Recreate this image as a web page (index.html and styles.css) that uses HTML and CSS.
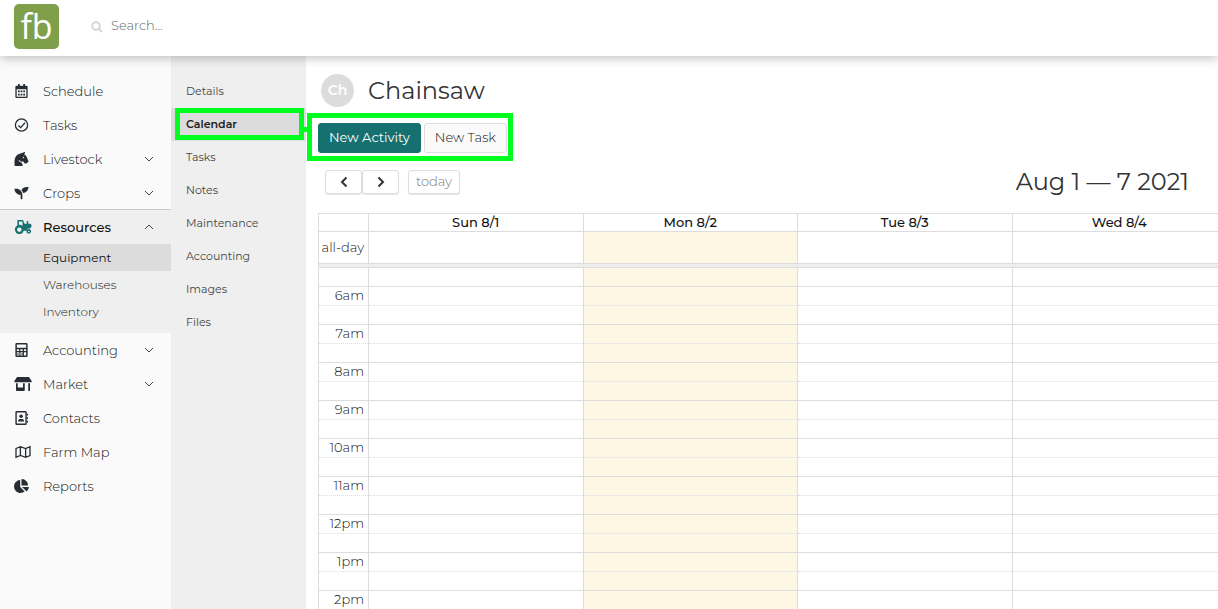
FILE: index.html
```html
<!doctype html>
<html lang="en">
  <head>
    <meta charset="utf-8" />
    <meta name="viewport" content="width=device-width, initial-scale=1" />
    <title>Chainsaw - Calendar</title>
    <link rel="stylesheet" href="styles.css">
  </head>

  <body>
    <header class="topbar">
      <a class="logo" href="#">fb</a>
      <form class="search">
        <svg class="search-icon" viewBox="0 0 12 12"><circle cx="5" cy="5" r="3.8" /><path d="M8 8l3 3" /></svg>
        <input type="search" aria-label="Search" placeholder="Search..." />
      </form>
    </header>

    <div class="layout">
      <!-- Main navigation -->
      <nav class="sidebar">
        <a class="nav-item" href="#">
          <svg class="icon" viewBox="0 0 16 16"><path d="M4 0h2v2h4V0h2v2h1.500q1.500 0 1.500 1.500V14.500q0 1.500-1.500 1.500h-11Q1 16 1 14.500v-11Q1 2 2.500 2H4zM2.500 6v8.500h11V6z" fill-rule="evenodd" /><path d="M4 7.500h2v2H4zM7 7.500h2v2H7zM10 7.500h2v2h-2zM4 11h2v2H4zM7 11h2v2H7zM10 11h2v2h-2z" /></svg>
          <span>Schedule</span>
        </a>
        <a class="nav-item" href="#">
          <svg class="icon line" viewBox="0 0 16 16"><circle cx="8" cy="8" r="7" /><path d="M4.500 8.500l2.500 2.500 5-5.500" /></svg>
          <span>Tasks</span>
        </a>
        <a class="nav-item" href="#">
          <svg class="icon" viewBox="0 0 512 512"><path d="M509.800 332.500l-69.900-164.300c-14.900-41.200-50.400-71-93-79.200 18-10.600 46.300-35.900 34.200-82.300-1.300-5-7.100-7.900-12-6.100L166.900 76.300C35.900 123.400 0 238.900 0 398.800V480c0 17.700 14.300 32 32 32h236.200c23.800 0 39.300-25 28.600-46.300L256 384v-.7c-45.600-3.500-84.600-30.700-104.300-69.600-1.600-3.100-.9-6.900 1.600-9.300l12.100-12.100c3.900-3.900 10.600-2.700 12.900 2.400 14.800 33.700 48.200 57.400 87.400 57.400 17.200 0 33-5.100 46.800-13.200l46 63.900c6 8.400 15.700 13.300 26 13.300h50.300c8.500 0 16.600-3.400 22.600-9.400l45.300-39.800c8.900-9.100 11.700-22.600 7.100-34.400zM328 224c-13.300 0-24-10.700-24-24s10.700-24 24-24 24 10.700 24 24-10.700 24-24 24z" /></svg>
          <span>Livestock</span>
          <svg class="chevron" viewBox="0 0 10 6"><path d="M1 1l4 4 4-4" /></svg>
        </a>
        <a class="nav-item" href="#">
          <svg class="icon" viewBox="0 0 512 512"><path d="M64 96H0c0 123.700 100.300 224 224 224v144c0 8.800 7.200 16 16 16h32c8.800 0 16-7.200 16-16V320C288 196.300 187.700 96 64 96zm384-64c-84.200 0-157.400 46.500-195.700 115.200 27.700 30.200 48.200 66.900 59 107.600C424 243.100 512 147.900 512 32h-64z" /></svg>
          <span>Crops</span>
          <svg class="chevron" viewBox="0 0 10 6"><path d="M1 1l4 4 4-4" /></svg>
        </a>
        <div class="nav-group">
          <a class="nav-item open" href="#">
            <svg class="icon wide" viewBox="0 0 18 15"><path fill-rule="evenodd" d="M3 0h6l1.600 4H13V1h1.600v3H17l1 1v2.500l-1.500 1.500h-2.200q-1.300.8-1.300 2.500H9.700A4.700 4.700 0 0 1 .5 11.200 4.700 4.700 0 0 1 3 5.800zM4.700 1.600v3.500q2.300-.1 3.800 1.400V2.500L8.100 1.600zM5 8a2.400 2.400 0 1 0 .1 0zM15.200 9.700a2.500 2.500 0 1 1-.1 0zm0 1.700a.8.800 0 1 0 .1 0z" /></svg>
            <span>Resources</span>
            <svg class="chevron" viewBox="0 0 10 6"><path d="M1 5l4-4 4 4" /></svg>
          </a>
          <a class="nav-sub active" href="#">Equipment</a>
          <a class="nav-sub" href="#">Warehouses</a>
          <a class="nav-sub" href="#">Inventory</a>
        </div>
        <a class="nav-item" href="#">
          <svg class="icon" viewBox="0 0 16 16"><path fill-rule="evenodd" d="M2.500 0h11Q15 0 15 1.500v13q0 1.500-1.500 1.500h-11Q1 16 1 14.500v-13Q1 0 2.500 0zM2.700 1.700v3.600h10.600V1.700zM2.700 7v2h2.500V7zM6.700 7v2h2.600V7zM10.800 7v2h2.500V7zM2.700 10.700v3.600h2.500v-3.600zM6.700 10.700v3.600h2.600v-3.600zM10.800 10.700v3.600h2.500v-3.600zM3 12h6v1H3z" /></svg>
          <span>Accounting</span>
          <svg class="chevron" viewBox="0 0 10 6"><path d="M1 1l4 4 4-4" /></svg>
        </a>
        <a class="nav-item" href="#">
          <svg class="icon wide" viewBox="0 0 640 512"><path d="M320 384H128V224H64v256c0 17.700 14.300 32 32 32h256c17.700 0 32-14.300 32-32V224h-64v160zm314.600-241.800l-85.300-128c-6-8.900-16-14.200-26.700-14.200H117.400c-10.700 0-20.700 5.300-26.600 14.200l-85.300 128c-14.200 21.300 1 49.800 26.600 49.800H608c25.500 0 40.700-28.500 26.600-49.800zM512 496c0 8.800 7.200 16 16 16h32c8.800 0 16-7.200 16-16V224h-64v272z" /></svg>
          <span>Market</span>
          <svg class="chevron" viewBox="0 0 10 6"><path d="M1 1l4 4 4-4" /></svg>
        </a>
        <a class="nav-item" href="#">
          <svg class="icon" viewBox="0 0 16 16"><path fill-rule="evenodd" d="M2.500 0h10Q14 0 14 1.500v13q0 1.500-1.500 1.500h-10Q1 16 1 14.500v-13Q1 0 2.500 0zM2.600 1.600v12.800h9.800V1.600z" /><circle cx="7.500" cy="6" r="2" /><path d="M4 12q0-3 2-3h3q2 0 2 3zM14 3h1.500v2H14zM14 7h1.500v2H14zM14 11h1.500v2H14z" /></svg>
          <span>Contacts</span>
        </a>
        <a class="nav-item" href="#">
          <svg class="icon wide line" viewBox="0 0 18 16"><path d="M1 4l5-2 6 2 5-2v10l-5 2-6-2-5 2zM6 2v10M12 4v10" /></svg>
          <span>Farm Map</span>
        </a>
        <a class="nav-item" href="#">
          <svg class="icon" viewBox="0 0 544 512"><path d="M527.790 288H290.500l158.030 158.030c6.040 6.040 15.980 6.530 22.190.68 38.700-36.460 65.320-85.610 73.130-140.860 1.340-9.460-6.510-17.850-16.060-17.850zm-15.830-64.800C503.720 103.740 408.260 8.280 288.800.04 279.680-.59 272 7.100 272 16.240V240h223.770c9.140 0 16.820-7.680 16.190-16.800zM224 288V50.710c0-9.550-8.390-17.400-17.840-16.060C86.990 51.490-4.100 155.600.14 280.370 4.500 408.510 114.830 513.590 243.030 511.980c50.400-.63 96.970-16.870 135.260-44.030 7.900-5.600 8.420-17.230 1.570-24.080L224 288z" /></svg>
          <span>Reports</span>
        </a>
      </nav>

      <!-- Pages of the selected resource -->
      <nav class="subnav">
        <a href="#">Details</a>
        <a class="active" href="#">Calendar</a>
        <a href="#">Tasks</a>
        <a href="#">Notes</a>
        <a href="#">Maintenance</a>
        <a href="#">Accounting</a>
        <a href="#">Images</a>
        <a href="#">Files</a>
      </nav>

      <main class="content">
        <div class="title">
          <span class="avatar">Ch</span>
          <h1>Chainsaw</h1>
        </div>

        <div class="actions">
          <button class="btn primary" type="button">New Activity</button>
          <button class="btn" type="button">New Task</button>
        </div>

        <div class="toolbar">
          <div class="arrows">
            <button type="button" aria-label="Previous week"><svg viewBox="0 0 8 12"><path d="M6.500 1.500L2 6l4.500 4.500" /></svg></button>
            <button type="button" aria-label="Next week"><svg viewBox="0 0 8 12"><path d="M1.500 1.500L6 6l-4.500 4.500" /></svg></button>
          </div>
          <button class="today-button" type="button" disabled>today</button>
          <h2>Aug 1 — 7 2021</h2>
        </div>

        <table class="calendar">
          <colgroup>
            <col class="axis" />
            <col />
            <col class="today" />
            <col />
            <col />
          </colgroup>
          <thead>
            <tr><th></th><th>Sun 8/1</th><th>Mon 8/2</th><th>Tue 8/3</th><th>Wed 8/4</th></tr>
          </thead>
          <tbody>
            <tr class="all-day"><td>all-day</td><td></td><td></td><td></td><td></td></tr>
            <tr class="divider"><td colspan="5"></td></tr>
          </tbody>
          <tbody class="slots">
            <tr class="half"><td></td><td></td><td></td><td></td><td></td></tr>
            <tr><td>6am</td><td></td><td></td><td></td><td></td></tr>
            <tr class="half"><td></td><td></td><td></td><td></td><td></td></tr>
            <tr><td>7am</td><td></td><td></td><td></td><td></td></tr>
            <tr class="half"><td></td><td></td><td></td><td></td><td></td></tr>
            <tr><td>8am</td><td></td><td></td><td></td><td></td></tr>
            <tr class="half"><td></td><td></td><td></td><td></td><td></td></tr>
            <tr><td>9am</td><td></td><td></td><td></td><td></td></tr>
            <tr class="half"><td></td><td></td><td></td><td></td><td></td></tr>
            <tr><td>10am</td><td></td><td></td><td></td><td></td></tr>
            <tr class="half"><td></td><td></td><td></td><td></td><td></td></tr>
            <tr><td>11am</td><td></td><td></td><td></td><td></td></tr>
            <tr class="half"><td></td><td></td><td></td><td></td><td></td></tr>
            <tr><td>12pm</td><td></td><td></td><td></td><td></td></tr>
            <tr class="half"><td></td><td></td><td></td><td></td><td></td></tr>
            <tr><td>1pm</td><td></td><td></td><td></td><td></td></tr>
            <tr class="half"><td></td><td></td><td></td><td></td><td></td></tr>
            <tr><td>2pm</td><td></td><td></td><td></td><td></td></tr>
            <tr class="half"><td></td><td></td><td></td><td></td><td></td></tr>
          </tbody>
        </table>
      </main>
    </div>
  </body>
</html>
```
FILE: styles.css
```css
* {
  box-sizing: border-box;
}

body {
  margin: 0;
  height: 100vh;
  display: flex;
  flex-direction: column;
  overflow: hidden;
  font-family: Montserrat, Inter, sans-serif;
  font-size: 13px;
  font-weight: 300;
  color: #111;
  background: white;
}

a {
  color: inherit;
  text-decoration: none;
}

button,
input {
  font: inherit;
  color: inherit;
}

h1,
h2 {
  margin: 0;
  font-size: 24px;
  line-height: 32px;
  font-weight: 400;
  color: #333;
}

.topbar {
  position: relative;
  z-index: 1;
  flex: none;
  display: flex;
  align-items: flex-start;
  gap: 32px;
  height: 56px;
  padding: 4px 14px;
  background: white;
  box-shadow: 0 2px 10px rgba(0, 0, 0, 0.25);
}

.logo {
  width: 45px;
  height: 45px;
  border-radius: 5px;
  background: #7f9f4a;
  color: white;
  font-family: "Open Sans", sans-serif;
  font-size: 34px;
  font-weight: 500;
  line-height: 44px;
  text-align: center;
}

.search {
  display: flex;
  align-items: center;
  gap: 8px;
  height: 42px;
}

.search-icon {
  width: 12px;
  height: 12px;
  margin-top: 4px;
  fill: none;
  stroke: #d5d5d5;
  stroke-width: 2;
}

.search input {
  width: 200px;
  padding: 0;
  border: none;
  outline: none;
}

.search input::placeholder {
  color: #666;
}

.layout {
  flex: 1;
  min-height: 0;
  display: flex;
}

.sidebar {
  flex: none;
  width: 171px;
  padding-top: 18px;
  background: #fafafa;
}

.nav-item {
  display: flex;
  align-items: center;
  height: 34px;
  padding: 0 17px 0 14px;
}

.nav-item span {
  flex: 1;
}

.icon {
  width: 15px;
  height: 14px;
  margin-right: 14px;
  fill: #272d33;
}

.icon.wide {
  width: 18px;
  margin-right: 11px;
}

.icon.line {
  fill: none;
  stroke: #272d33;
  stroke-width: 1.5;
}

.chevron {
  width: 10px;
  height: 6px;
  fill: none;
  stroke: #444;
}

.nav-group {
  margin-top: -1px;
  padding-bottom: 8px;
  border-top: 1px solid #c8c8c8;
  background: #efefef;
}

.nav-item.open {
  font-weight: 500;
}

.nav-item.open .icon {
  fill: #15706f;
}

.nav-sub {
  display: block;
  padding-left: 43px;
  font-size: 12px;
  line-height: 27px;
}

.nav-sub.active {
  background: #dcdcdc;
  font-weight: 400;
}

.subnav {
  flex: none;
  width: 135px;
  padding-top: 19px;
  background: #efefef;
  font-size: 11px;
  font-weight: 400;
}

.subnav a {
  display: block;
  padding-left: 15px;
  line-height: 33px;
  color: #444;
}

.subnav .active {
  position: relative;
  background: #dcdcdc;
  font-weight: 600;
  color: #222;
}

/* guide frame around the selected page */
.subnav .active::after {
  content: "";
  position: absolute;
  inset: 0 2px 1px 4px;
  border: 5px solid #00ff21;
}

/* line joining it to the frame around the buttons */
.subnav .active::before {
  content: "";
  position: absolute;
  top: 19px;
  right: -3px;
  width: 6px;
  height: 5px;
  background: #00ff21;
}

.content {
  flex: 1;
  min-width: 0;
  padding: 18px 0 0 12px;
  overflow: hidden;
}

.title {
  display: flex;
  align-items: center;
  gap: 14px;
  padding-left: 3px;
}

.avatar {
  width: 33px;
  height: 33px;
  border-radius: 50%;
  background: #dcdcdc;
  color: white;
  font-size: 14px;
  font-weight: 600;
  line-height: 33px;
  text-align: center;
}

.actions {
  display: flex;
  gap: 3px;
  width: max-content;
  margin: 6px 0 0 -11px;
  padding: 5px 1px 3px 6px;
  border: 5px solid #00ff21;
}

.btn {
  height: 30px;
  padding: 0 10px 2px;
  border: 1px solid #ddd;
  border-radius: 3px;
  background: #fafafa;
}

.btn.primary {
  border-color: #15706f;
  background: #15706f;
  color: white;
  font-weight: 400;
}

.toolbar {
  display: flex;
  align-items: center;
  gap: 9px;
  margin: 5px 29px 15px 7px;
}

.toolbar h2 {
  margin-left: auto;
}

.arrows {
  display: flex;
}

.toolbar button {
  height: 24px;
  border: 1px solid #ddd;
  border-radius: 3px;
  background: white;
  box-shadow: 0 1px 1px rgba(0, 0, 0, 0.1);
}

.arrows button {
  display: flex;
  align-items: center;
  justify-content: center;
  width: 37px;
  padding: 0;
}

.arrows svg {
  width: 8px;
  height: 12px;
  fill: none;
  stroke: #333;
  stroke-width: 2;
}

.toolbar .today-button {
  padding: 0 7px 2px;
  color: #777;
}

/* the week runs on past the right edge */
.calendar {
  width: calc(100% + 9px);
  table-layout: fixed;
  border-collapse: collapse;
  line-height: 16px;
}

.calendar .axis {
  width: 50px;
}

.calendar .today {
  background: #fdf7e3;
}

.calendar th,
.calendar td {
  height: 19px;
  padding: 0 0 2px;
  border: 1px solid #ddd;
}

.calendar th {
  height: 18px;
  padding: 0 0 1px;
  background: white;
  font-weight: 500;
}

.calendar td:first-child {
  padding-right: 4px;
  text-align: right;
}

.calendar .all-day td {
  height: 32px;
}

.calendar .divider td {
  height: 4px;
  padding: 0;
  background: #eee;
  line-height: 0;
}

/* only the top edge of a slot is drawn, so half hours stay dotted */
.calendar .slots td {
  border-bottom: none;
}

.calendar .half td {
  border-top-style: dotted;
}
```
